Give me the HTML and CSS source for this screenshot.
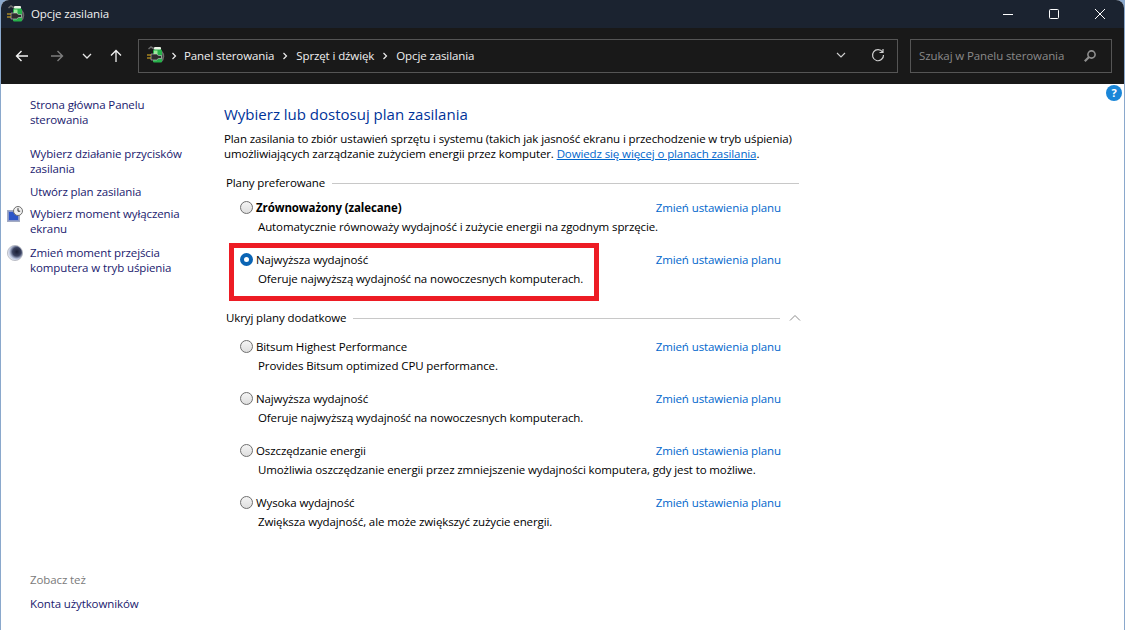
FILE: index.html
```html
<!DOCTYPE html>
<html lang="pl">
<head>
<meta charset="utf-8">
<title>Opcje zasilania</title>
<link rel="stylesheet" href="styles.css">
</head>
<body>
<div class="window">
  <header class="titlebar">
    <svg class="app-icon" width="18" height="18" viewBox="0 0 18 18"><use href="#battery"/></svg>
    <span class="title">Opcje zasilania</span>
    <div class="controls">
      <svg width="12" height="12" viewBox="0 0 12 12"><path d="M1 6.5h10" stroke="#fff" fill="none"/></svg>
      <svg width="12" height="12" viewBox="0 0 12 12"><rect x="1.5" y="1.5" width="9" height="9" rx="1" stroke="#fff" fill="none"/></svg>
      <svg width="12" height="12" viewBox="0 0 12 12"><path d="M1 1l10 10M11 1L1 11" stroke="#fff" fill="none"/></svg>
    </div>
  </header>
  <nav class="toolbar">
    <div class="navs">
      <svg width="16" height="16" viewBox="0 0 16 16"><path d="M14 8H2.5M7.5 3 2.5 8l5 5" stroke="#f2f2f2" stroke-width="1.4" fill="none"/></svg>
      <svg width="16" height="16" viewBox="0 0 16 16"><path d="M2 8h11.5M8.5 3l5 5-5 5" stroke="#7d7d7d" stroke-width="1.4" fill="none"/></svg>
      <svg width="10" height="10" viewBox="0 0 10 10"><path d="M1 3l4 4 4-4" stroke="#e6e6e6" stroke-width="1.3" fill="none"/></svg>
      <svg width="16" height="16" viewBox="0 0 16 16"><path d="M8 14V2.5M3 7.5l5-5 5 5" stroke="#f2f2f2" stroke-width="1.3" fill="none"/></svg>
    </div>
    <div class="address">
      <svg class="crumb-icon" width="18" height="18" viewBox="0 0 18 18"><use href="#battery"/></svg>
      <svg class="sep" width="6" height="8" viewBox="0 0 6 8"><path d="M1.5 1l3 3-3 3" stroke="#eee" stroke-width="1.2" fill="none"/></svg>
      <span>Panel sterowania</span>
      <svg class="sep" width="6" height="8" viewBox="0 0 6 8"><path d="M1.5 1l3 3-3 3" stroke="#eee" stroke-width="1.2" fill="none"/></svg>
      <span>Sprzęt i dźwięk</span>
      <svg class="sep" width="6" height="8" viewBox="0 0 6 8"><path d="M1.5 1l3 3-3 3" stroke="#eee" stroke-width="1.2" fill="none"/></svg>
      <span>Opcje zasilania</span>
      <span class="address-end">
        <svg width="10" height="10" viewBox="0 0 10 10"><path d="M1 3l4 4 4-4" stroke="#d0d0d0" stroke-width="1.1" fill="none"/></svg>
        <svg width="14" height="14" viewBox="0 0 14 14"><path d="M11.6 4.2A5.5 5.5 0 1 0 12.5 7M12 1v3.5H8.5" stroke="#cfcfcf" stroke-width="1.2" fill="none"/></svg>
      </span>
    </div>
    <div class="search">
      <span>Szukaj w Panelu sterowania</span>
      <svg width="14" height="14" viewBox="0 0 14 14"><circle cx="8.5" cy="5.5" r="3.6" stroke="#8f8f8f" stroke-width="1.6" fill="none"/><path d="M6 8 1.8 12.2" stroke="#8f8f8f" stroke-width="2.2"/></svg>
    </div>
  </nav>
  <div class="content">
    <aside class="sidebar">
      <div class="side-links">
        <a>Strona główna Panelu sterowania</a>
        <a class="gap-large">Wybierz działanie przycisków zasilania</a>
        <a class="gap-small">Utwórz plan zasilania</a>
        <a class="gap-small has-icon">
          <svg class="side-icon" width="16" height="16" viewBox="0 0 16 16"><rect x="0.5" y="4.5" width="12" height="11" fill="#8a98c8" stroke="#a3abc2"/><rect x="2" y="6" width="9" height="8" fill="#2c55c8"/><circle cx="11" cy="5" r="4.5" fill="#f0f0f0" stroke="#6f6f6f"/><path d="M11 2.2v3h2.2" stroke="#333" fill="none"/></svg>
          Wybierz moment wyłączenia ekranu
        </a>
        <a class="gap-medium has-icon">
          <svg class="side-icon" width="16" height="16" viewBox="0 0 16 16"><defs><radialGradient id="moon" cx="0.62" cy="0.42" r="0.62"><stop offset="0" stop-color="#1a1e34"/><stop offset="0.45" stop-color="#3a4260"/><stop offset="0.75" stop-color="#b8c2dc"/><stop offset="1" stop-color="#eef1f8"/></radialGradient></defs><circle cx="8" cy="8" r="7.6" fill="url(#moon)" stroke="#a8abb4" stroke-width="0.7"/></svg>
          Zmień moment przejścia komputera w tryb uśpienia
        </a>
      </div>
      <div class="see-also">
        <p class="see-label">Zobacz też</p>
        <a>Konta użytkowników</a>
      </div>
    </aside>
    <main class="main">
      <h1>Wybierz lub dostosuj plan zasilania</h1>
      <p class="intro">Plan zasilania to zbiór ustawień sprzętu i systemu (takich jak jasność ekranu i przechodzenie w tryb uśpienia)<br>umożliwiających zarządzanie zużyciem energii przez komputer. <a class="learn">Dowiedz się więcej o planach zasilania</a>.</p>

      <div class="section first"><span>Plany preferowane</span><i></i></div>
      <div class="plan">
        <span class="radio"></span><b class="plan-name">Zrównoważony (zalecane)</b><a class="change">Zmień ustawienia planu</a>
        <p class="desc">Automatycznie równoważy wydajność i zużycie energii na zgodnym sprzęcie.</p>
      </div>
      <div class="plan highlighted">
        <span class="radio on"></span><span class="plan-name">Najwyższa wydajność</span><a class="change">Zmień ustawienia planu</a>
        <p class="desc">Oferuje najwyższą wydajność na nowoczesnych komputerach.</p>
        <div class="redbox"></div>
      </div>

      <div class="section second"><span>Ukryj plany dodatkowe</span><i></i>
        <svg width="12" height="12" viewBox="0 0 12 12"><path d="M1 8.5l5-5 5 5" stroke="#8c8c8c" fill="none"/></svg>
      </div>
      <div class="plan">
        <span class="radio"></span><span class="plan-name">Bitsum Highest Performance</span><a class="change">Zmień ustawienia planu</a>
        <p class="desc">Provides Bitsum optimized CPU performance.</p>
      </div>
      <div class="plan">
        <span class="radio"></span><span class="plan-name">Najwyższa wydajność</span><a class="change">Zmień ustawienia planu</a>
        <p class="desc">Oferuje najwyższą wydajność na nowoczesnych komputerach.</p>
      </div>
      <div class="plan">
        <span class="radio"></span><span class="plan-name">Oszczędzanie energii</span><a class="change">Zmień ustawienia planu</a>
        <p class="desc">Umożliwia oszczędzanie energii przez zmniejszenie wydajności komputera, gdy jest to możliwe.</p>
      </div>
      <div class="plan">
        <span class="radio"></span><span class="plan-name">Wysoka wydajność</span><a class="change">Zmień ustawienia planu</a>
        <p class="desc">Zwiększa wydajność, ale może zwiększyć zużycie energii.</p>
      </div>
    </main>
    <div class="help">?</div>
  </div>
</div>
<svg class="defs" width="0" height="0">
  <symbol id="battery" viewBox="0 0 18 18">
    <path d="M1.5 3 4 1l3.5 2" fill="none" stroke="#6a6a6a" stroke-width="1.6"/>
    <path d="M14.5 5.5c2.6 2.8 2.6 7-.5 10" fill="none" stroke="#6a6a6a" stroke-width="1.8"/>
    <rect x="7" y="1" width="7" height="3" rx="1" fill="#eef4e8"/>
    <rect x="6" y="3.5" width="9" height="13" rx="1.2" fill="#27b04a"/>
    <rect x="7" y="4.5" width="3.5" height="7" fill="#9be89a"/>
    <path d="M4 8h5.5l2 1.5h3v3h-3l-2 1.5H4z" fill="#2e2e2e" stroke="#cfcfcf" stroke-width="0.6"/>
    <path d="M0 9h4M0 12h4" stroke="#eab822" stroke-width="1.2"/>
  </symbol>
</svg>
</body>
</html>
```
FILE: styles.css
```css
* { box-sizing: border-box; }
html, body { margin: 0; height: 100%; }
body { font-family: "Open Sans", "Noto Sans", sans-serif; font-size: 11.5px; letter-spacing: -0.11px; background: #8aa8cc; color: #000; overflow: hidden; }
p, h1 { margin: 0; }
.defs { position: absolute; }
.window { width: 1123px; height: 630px; margin-left: 1px; display: flex; flex-direction: column; background: #fff; border-radius: 8px 8px 0 0; overflow: hidden; }

.titlebar { height: 28px; background: #1b2330; color: #f2f2f2; display: flex; align-items: center; padding: 0 0 1px 6px; }
.title { margin-left: 6px; }
.controls { margin-left: auto; display: flex; gap: 34px; padding-right: 18px; margin-top: 1px; }
.controls svg { display: block; }

.toolbar { height: 56px; background: #191919; display: flex; align-items: flex-start; padding: 11px 12px 0 0; color: #f0f0f0; }
.navs { width: 137px; height: 34px; display: flex; align-items: center; padding-left: 13px; }
.navs svg:nth-child(1) { margin-right: 19px; }
.navs svg:nth-child(2) { margin-right: 17px; }
.navs svg:nth-child(3) { margin-right: 16px; }
.address { width: 760px; height: 34px; border: 1px solid #555; display: flex; align-items: center; padding: 0 0 2px 8px; }
.crumb-icon { margin-right: 6px; }
.sep { margin: 2px 8px 0 8px; }
.crumb-icon + .sep { margin-left: 0; margin-right: 7px; }
.address-end { margin-left: auto; display: flex; align-items: center; gap: 25px; padding-right: 12px; }
.search { width: 202px; height: 34px; margin-left: 12px; border: 1px solid #555; display: flex; align-items: center; justify-content: space-between; padding: 0 14px 2px 8px; color: #8a8a8a; }
.search svg { margin-top: 2px; }

.content { flex: 1; display: flex; position: relative; }
.sidebar { width: 223px; padding: 13px 0 19px 29px; display: flex; flex-direction: column; justify-content: space-between; line-height: 15px; }
.side-links { display: flex; flex-direction: column; }
.sidebar a { color: #1a1a6e; display: block; width: 160px; position: relative; }
.gap-large { margin-top: 19px; }
.gap-small { margin-top: 8px; }
.has-icon.gap-small { margin-top: 7px; }
.gap-medium { margin-top: 9px; }
.side-icon { position: absolute; left: -23px; top: 0; }
.see-label { color: #7a7a7a; margin-bottom: 9px; }

.main { width: 575px; padding-top: 20px; }
h1 { font-size: 15px; font-weight: 400; color: #003399; line-height: 20px; letter-spacing: 0; }
.intro { margin-top: 7px; line-height: 15px; color: #000; white-space: nowrap; }
.learn { color: #0066cc; text-decoration: underline; }

.section { display: flex; align-items: center; padding-left: 2px; line-height: 16px; color: #000; gap: 7px; }
.section i { flex: 1; height: 1px; background: #c8c8c8; }
.section.first { margin-top: 14px; margin-bottom: 6px; }
.section.second { margin-top: 9px; margin-bottom: 10px; }
.section.second svg { margin-right: -2px; margin-left: 2px; }

.plan { position: relative; display: grid; grid-template-columns: 16px 1fr auto; grid-template-rows: 20px 20px; align-items: center; align-content: start; height: 52px; padding: 0 18px 0 16px; }
.plan b { font-weight: 700; }
.radio { width: 13px; height: 13px; border-radius: 50%; border: 1px solid #6f6f6f; background: linear-gradient(#f4f4f4, #dedede); }
.radio.on { background: #fff; border: 4px solid #0a64b4; }
.change { color: #0066cc; }
.desc { grid-column: 2 / 4; color: #000; padding-left: 2px; line-height: 20px; }
.redbox { position: absolute; left: 5px; top: -6px; width: 370px; height: 58px; border: 5px solid #ed1c24; }

.help { position: absolute; left: 1105px; top: 1px; width: 16px; height: 16px; border-radius: 50%; background: #1a86d8; color: #fff; font-weight: 700; font-size: 11px; line-height: 16px; text-align: center; }
```
